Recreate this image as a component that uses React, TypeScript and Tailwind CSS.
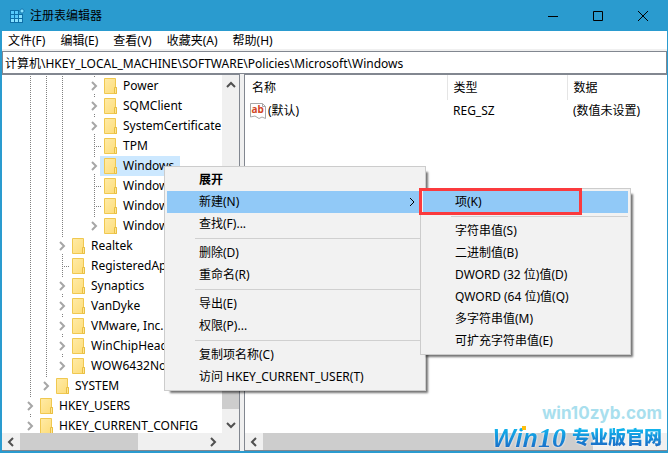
import { clsx } from "clsx";

type TreeNode = {
  name: string;
  level: number;
  guides: number[];
  leaf?: boolean;
  last?: boolean;
  selected?: boolean;
};

type MenuEntry = {
  label?: string;
  bold?: boolean;
  active?: boolean;
  children?: MenuEntry[];
};

const nodes: TreeNode[] = [
  { name: "Power", level: 4, guides: [0, 1, 2] },
  { name: "SQMClient", level: 4, guides: [0, 1, 2] },
  { name: "SystemCertificate", level: 4, guides: [0, 1, 2] },
  { name: "TPM", level: 4, guides: [0, 1, 2], leaf: true },
  { name: "Windows", level: 4, guides: [0, 1, 2], selected: true },
  { name: "Windows", level: 4, guides: [0, 1, 2], leaf: true },
  { name: "Windows", level: 4, guides: [0, 1, 2], leaf: true },
  { name: "Windows", level: 4, guides: [0, 1, 2], last: true },
  { name: "Realtek", level: 2, guides: [0, 1] },
  { name: "RegisteredAp", level: 2, guides: [0, 1], leaf: true },
  { name: "Synaptics", level: 2, guides: [0, 1] },
  { name: "VanDyke", level: 2, guides: [0, 1] },
  { name: "VMware, Inc.", level: 2, guides: [0, 1] },
  { name: "WinChipHead", level: 2, guides: [0, 1] },
  { name: "WOW6432No", level: 2, guides: [0, 1], last: true },
  { name: "SYSTEM", level: 1, guides: [0], last: true },
  { name: "HKEY_USERS", level: 0, guides: [] },
  { name: "HKEY_CURRENT_CONFIG", level: 0, guides: [], last: true },
];

const newItems: MenuEntry[] = [
  { label: "项(K)", active: true },
  {},
  { label: "字符串值(S)" },
  { label: "二进制值(B)" },
  { label: "DWORD (32 位)值(D)" },
  { label: "QWORD (64 位)值(Q)" },
  { label: "多字符串值(M)" },
  { label: "可扩充字符串值(E)" },
];

const contextItems: MenuEntry[] = [
  { label: "展开", bold: true },
  { label: "新建(N)", active: true, children: newItems },
  { label: "查找(F)..." },
  {},
  { label: "删除(D)" },
  { label: "重命名(R)" },
  {},
  { label: "导出(E)" },
  { label: "权限(P)..." },
  {},
  { label: "复制项名称(C)" },
  { label: "访问 HKEY_CURRENT_USER(T)" },
];

const dotsY = "bg-[repeating-linear-gradient(to_bottom,#808080_0_1px,transparent_1px_2px)]";
const dotsX = "bg-[repeating-linear-gradient(to_right,#808080_0_1px,transparent_1px_2px)]";

const Chevron = ({ className }: { className?: string }) => (
  <svg viewBox="0 0 10 10" className={clsx("h-[10px] w-[10px] shrink-0", className)} fill="none" stroke="currentColor">
    <path d="M3 1 L7 5 L3 9" />
  </svg>
);

const FolderIcon = () => (
  <svg viewBox="0 0 14 16" className="h-4 w-[14px] shrink-0">
    <defs>
      <linearGradient id="folder" x1="0" y1="0" x2="1" y2="1">
        <stop offset="0" stopColor="#ffeba6" />
        <stop offset="1" stopColor="#fddc78" />
      </linearGradient>
    </defs>
    <path d="M.5 .5H11.5V9.5H12.5V15.5H.5Z" fill="url(#folder)" stroke="#f0c850" />
    <path d="M10.5 9.5H12.5V15.5H10.5Z" fill="#ffe694" stroke="#e9bf42" />
  </svg>
);

const RegistryIcon = () => (
  <svg viewBox="0 0 16 16" className="h-4 w-4">
    <path d="M1 2H10V6H14V15H1Z" fill="#0d6ea8" />
    <path d="M2 3h3v3H2zM6 3h3v3H6zM2 7h3v3H2zM6 7h3v3H6z" fill="#55c8fa" />
    <path d="M10 7h3v3H10zM2 11h3v3H2zM6 11h3v3H6zM10 11h3v3H10z" fill="#86e0ff" />
    <path d="M13 .5L15.5 3L13 5.5L10.5 3Z" fill="#86e0ff" stroke="#0d6ea8" />
  </svg>
);

const StringIcon = () => (
  <svg viewBox="0 0 16 16" className="h-4 w-4 shrink-0">
    <path d="M.5 .5H12.5L15.5 3.5V15.5L12 14L9 15.5L5 13L.5 14Z" fill="#fff" stroke="#a8a8a8" />
    <path d="M12.5 .5V3.5H15.5" fill="none" stroke="#a8a8a8" />
    <text x="1.5" y="10" fontSize="10" fontWeight="700" fontFamily="Noto Sans" fill="#d24726">
      ab
    </text>
  </svg>
);

const TreeRow = ({ node }: { node: TreeNode }) => (
  <li className="flex h-5 shrink-0 items-center pl-5">
    {Array.from({ length: node.level }, (_, i) => (
      <span key={i} className="flex h-5 w-4 shrink-0 justify-center">
        {node.guides.includes(i) && <span className={clsx("w-px", dotsY)} />}
      </span>
    ))}
    <span className="relative flex h-5 w-[14px] shrink-0 items-center pl-[3px]">
      <span className={clsx("absolute top-0 left-2 w-px", node.last ? "h-[10px]" : "h-5", dotsY)} />
      {node.leaf ? (
        <span className={clsx("absolute top-[10px] left-2 h-px w-2", dotsX)} />
      ) : (
        <span className="relative bg-white py-[3px]">
          <Chevron className="stroke-2 text-[#a6a6a6]" />
        </span>
      )}
    </span>
    <span
      className={clsx("flex h-5 items-center gap-[5px] pr-[6px] pl-1 whitespace-nowrap", node.selected && "bg-[#cce8ff]")}
    >
      <FolderIcon />
      {node.name}
    </span>
  </li>
);

const Menu = ({ items }: { items: MenuEntry[] }) => (
  <ul className="border border-[#ccc] bg-[#f2f2f2] p-[2px] shadow-[4px_4px_2px_-2px_rgba(0,0,0,0.55)]">
    {items.map((item, i) =>
      item.label ? (
        <li key={i} className="relative">
          <button
            className={clsx(
              "flex h-[22px] w-full items-center justify-between pr-[6px] pl-8 whitespace-nowrap",
              item.bold && "font-bold",
              item.active && "bg-[#91c9f7]"
            )}
          >
            {item.label}
            {item.children && <Chevron />}
          </button>
          {item.children && (
            <div className="absolute -top-[3px] left-full -ml-[3px] w-[211px]">
              <Menu items={item.children} />
              <div className="pointer-events-none absolute top-0 -left-px h-[27px] w-[163px] border-3 border-[#fb3a3d]" />
            </div>
          )}
        </li>
      ) : (
        <li key={i} className="ml-7 flex h-[7px] items-center">
          <span className="h-px w-full bg-[#d0d0d0]" />
        </li>
      )
    )}
  </ul>
);

const HScroll = ({ thumb, corner }: { thumb: string; corner?: boolean }) => (
  <div className={clsx("flex h-[17px] shrink-0 items-center bg-[#f0f0f0] text-[#505050]", corner && "pr-[17px]")}>
    <span className="flex w-[18px] justify-center">
      <Chevron className="rotate-180 stroke-2" />
    </span>
    <div className="h-full flex-1">
      <div className={clsx("h-full bg-[#cdcdcd]", thumb)} />
    </div>
    <span className="flex w-[18px] justify-center">
      <Chevron className="stroke-2" />
    </span>
  </div>
);

const App = () => {
  return (
    <div className="relative flex h-screen flex-col overflow-hidden border-r border-b-2 border-l-2 border-[#2a9bcf] bg-[#f0f0f0] font-['Noto_Sans','Noto_Sans_CJK_SC',sans-serif] text-xs text-black">
      <header className="flex h-[31px] shrink-0 items-center bg-[#2a9bcf] pr-[2px] pl-[7px]">
        <RegistryIcon />
        <h1 className="ml-[5px] flex-1">注册表编辑器</h1>
        <button aria-label="最小化" className="flex h-full w-[45px] items-center justify-center">
          <svg viewBox="0 0 10 10" className="h-[10px] w-[10px]" stroke="#000">
            <path d="M0 5.5H10" />
          </svg>
        </button>
        <button aria-label="最大化" className="flex h-full w-[45px] items-center justify-center">
          <svg viewBox="0 0 10 10" className="h-[10px] w-[10px]" fill="none" stroke="#000">
            <path d="M.5 .5H9.5V9.5H.5Z" />
          </svg>
        </button>
        <button aria-label="关闭" className="flex h-full w-[45px] items-center justify-center">
          <svg viewBox="0 0 10 10" className="h-[10px] w-[10px]" stroke="#000">
            <path d="M0 0L10 10M10 0L0 10" />
          </svg>
        </button>
      </header>

      <nav className="mb-[2px] flex h-[18px] shrink-0 items-end gap-[15px] bg-white pl-[6px]">
        {["文件(F)", "编辑(E)", "查看(V)", "收藏夹(A)", "帮助(H)"].map((label) => (
          <button key={label}>{label}</button>
        ))}
      </nav>

      <input
        aria-label="地址"
        className="h-[23px] w-full shrink-0 border border-[#828790] bg-white px-[2px]"
        defaultValue="计算机\HKEY_LOCAL_MACHINE\SOFTWARE\Policies\Microsoft\Windows"
      />

      <main className="flex min-h-0 flex-1 gap-1">
        <section className="flex w-[238px] shrink-0 flex-col border-t border-r border-b border-[#828790] bg-white">
          <div className="flex min-h-0 flex-1">
            <ul className="flex min-w-0 flex-1 flex-col overflow-hidden pt-px">
              {nodes.map((node, i) => (
                <TreeRow key={i} node={node} />
              ))}
            </ul>
            <div className="flex w-[17px] shrink-0 flex-col items-center bg-[#f0f0f0] text-[#505050]">
              <span className="flex h-5 items-center">
                <Chevron className="-rotate-90 stroke-2" />
              </span>
              <div className="mt-auto mb-[7px] h-[90px] w-full bg-[#cdcdcd]" />
              <span className="flex h-[17px] items-center">
                <Chevron className="rotate-90 stroke-2" />
              </span>
            </div>
          </div>
          <HScroll thumb="w-[118px]" corner />
        </section>

        <section className="flex min-w-0 flex-1 flex-col border border-r-0 border-[#828790] bg-white">
          <div className="min-h-0 flex-1">
            <table className="w-full table-fixed text-left">
              <thead>
                <tr className="h-[25px]">
                  <th className="w-[202px] border-r border-[#e5e5e5] pl-[7px] font-normal">名称</th>
                  <th className="w-[120px] border-r border-[#e5e5e5] pl-[6px] font-normal">类型</th>
                  <th className="pl-[6px] font-normal">数据</th>
                </tr>
              </thead>
              <tbody>
                <tr className="h-[22px]">
                  <td className="pl-[5px]">
                    <span className="flex items-center gap-[2px]">
                      <StringIcon />
                      (默认)
                    </span>
                  </td>
                  <td className="pl-[6px]">REG_SZ</td>
                  <td className="pl-[6px]">(数值未设置)</td>
                </tr>
              </tbody>
            </table>
          </div>
          <HScroll thumb="w-[330px]" />
        </section>
      </main>

      <div className="absolute top-[166px] left-[162px] w-[262px]">
        <Menu items={contextItems} />
      </div>

      {/* Site watermark */}
      <div className="pointer-events-none absolute right-[5px] bottom-0 flex flex-col items-end">
        <p className="font-[Inter,sans-serif] text-[17px] leading-5 font-bold text-[#a9dfee]">win10zyb.com</p>
        <p className="flex h-7 items-center gap-[2px] drop-shadow-[0_0_1px_#fff]">
          <span className="relative bg-linear-to-b from-[#12b6ee] from-20% to-[#1a6fc8] to-80% bg-clip-text pr-1 text-[26px] leading-8 font-semibold text-transparent italic">
            Win
            <span className="font-['Liberation_Serif',serif] text-[28px] font-bold">10</span>
            <span className="absolute top-[5px] left-[30px] h-1 w-1 bg-[#fdbf0f]" />
          </span>
          <span className="bg-linear-to-b from-[#12b6ee] from-20% to-[#1a6fc8] to-80% bg-clip-text text-lg leading-7 font-black text-transparent">
            专业版官网
          </span>
        </p>
      </div>
    </div>
  );
};

export default App;
